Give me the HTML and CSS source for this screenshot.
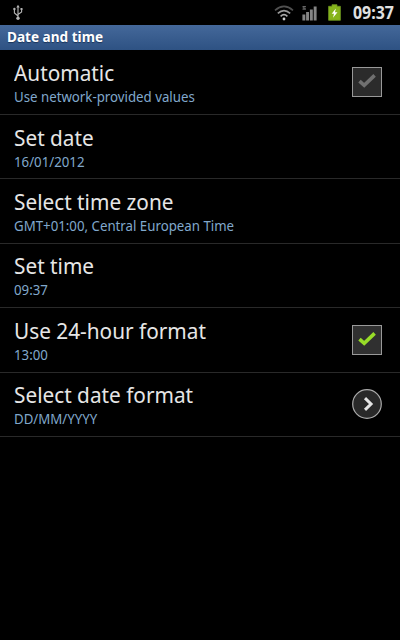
FILE: index.html
```html
<!DOCTYPE html>
<html lang="en">
<head>
<meta charset="utf-8">
<title>Date and time</title>
<link rel="stylesheet" href="styles.css">
</head>
<body>
<div class="status">
  <svg class="usb" width="12" height="17" viewBox="0 0 12 17" fill="none" stroke="#b4b4b4" stroke-width="1.1">
    <path d="M6 3v11M6 12L2.4 9V6M6 10.5L9.6 8V5"/>
    <path d="M6 .8L7.7 3.6H4.3zM1.2 5a1.2 1.2 0 1 0 2.4 0a1.2 1.2 0 1 0-2.4 0M8.5 4h2v2H8.5z" fill="#b4b4b4" stroke="none"/>
    <circle cx="6" cy="14.3" r="1.7" fill="#b4b4b4" stroke="none"/>
  </svg>
  <svg class="wifi" width="20" height="16" viewBox="0 0 20 16" fill="none" stroke-width="1.6">
    <path d="M1 5.3Q10-2.6 19 5.3" stroke="#505050"/>
    <path d="M3.8 8.4Q10 2.7 16.2 8.4" stroke="#999"/>
    <path d="M6.6 11.3Q10 8.1 13.4 11.3" stroke="#aaa"/>
    <circle cx="10" cy="14" r="1.4" fill="#ccc"/>
  </svg>
  <svg class="signal" width="15" height="16" viewBox="0 0 15 16" fill="#858585">
    <path d="M.4 9.5h2.9v6H.4zM4.1 7H7v8.5H4.1zM7.9 4.5h2.9v11H7.9zM11.7 1.6h2.9v13.9h-2.9z"/>
    <path d="M.5 1h3.4v1.3H2.4v1h1.5v1.4H.5V3.4h.9v-1H.5z" fill="#666"/>
  </svg>
  <svg class="battery" width="13" height="17" viewBox="0 0 13 17">
    <path d="M4 .7h5v1.6h3.4v14H.6v-14H4z" fill="#86b41c" stroke="#6b9420" stroke-width=".8"/>
    <path d="M7.8 4.4L3.7 9.8H6L5 13.8L9.5 8.2H7z" fill="#fff"/>
  </svg>
  <span class="clock">09:37</span>
</div>
<header class="titlebar"><span>Date and time</span></header>
<main class="list">
  <div class="row">
    <div class="text"><span class="title">Automatic</span><span class="sub">Use network-provided values</span></div>
    <svg class="control off" width="31" height="31" viewBox="0 0 31 31">
      <rect class="box" x=".5" y=".5" width="29" height="29"/><path class="tick" d="M7.5 14.2L12.2 18.4L22.6 8.4"/>
    </svg>
  </div>
  <div class="row">
    <div class="text"><span class="title">Set date</span><span class="sub">16/01/2012</span></div>
  </div>
  <div class="row">
    <div class="text"><span class="title">Select time zone</span><span class="sub">GMT+01:00, Central European Time</span></div>
  </div>
  <div class="row">
    <div class="text"><span class="title">Set time</span><span class="sub">09:37</span></div>
  </div>
  <div class="row">
    <div class="text"><span class="title">Use 24-hour format</span><span class="sub">13:00</span></div>
    <svg class="control on" width="31" height="31" viewBox="0 0 31 31">
      <rect class="box" x=".5" y=".5" width="29" height="29"/><path class="tick" d="M7.5 14.2L12.2 18.4L22.6 8.4"/>
    </svg>
  </div>
  <div class="row">
    <div class="text"><span class="title">Select date format</span><span class="sub">DD/MM/YYYY</span></div>
    <svg class="control" width="31" height="31" viewBox="0 0 31 31">
      <circle class="disc" cx="15" cy="15" r="14.3"/><path class="arrow" d="M13 9.2L19 15L13 20.8"/>
    </svg>
  </div>
</main>
</body>
</html>
```
FILE: styles.css
```css
* { box-sizing: border-box; }
body {
  margin: 0;
  height: 640px;
  overflow: hidden;
  background: #000;
  color: #e6e6e6;
  font-family: "Noto Sans", "Open Sans", sans-serif;
}
.status {
  display: flex;
  align-items: center;
  height: 25px;
  padding: 0 6px 0 12px;
}
.usb { margin-right: auto; }
.signal { margin-left: 8px; }
.battery { margin-left: 11px; }
.clock {
  width: 41px;
  margin-left: 12px;
  font-size: 17px;
  font-weight: 700;
  line-height: 25px;
  white-space: nowrap;
  color: #e0e0e0;
  transform: scaleX(.935);
  transform-origin: 0 0;
}
.titlebar {
  height: 25px;
  padding-left: 7px;
  background: linear-gradient(#44689a, #2e5283);
  font-size: 14px;
  font-weight: 700;
  line-height: 24px;
  color: #fff;
  text-shadow: 0 1px 1px #1b355a;
}
.titlebar span {
  display: inline-block;
  transform: scaleX(.97);
  transform-origin: 0 0;
}
.list { padding-top: .6px; }
.row {
  display: flex;
  align-items: center;
  justify-content: space-between;
  height: 64.4px;
  padding: 0 17px 0 14px;
  border-bottom: 1px solid #292929;
}
.text {
  display: flex;
  flex-direction: column;
  align-items: flex-start;
  padding-top: 3px;
  white-space: nowrap;
}
.title {
  font-size: 22.5px;
  line-height: 26px;
  transform: scaleX(.924);
  transform-origin: 0 0;
}
.sub {
  font-size: 14px;
  line-height: 21px;
  color: #80a8cc;
  transform: scaleX(.947);
  transform-origin: 0 0;
}
.control { flex: none; fill: none; margin-top: 1px; }
.box { fill: #303030; stroke: #999; }
.off .box { fill: #2b2b2b; }
.tick { stroke-width: 3.6; }
.off .tick { stroke: #707070; }
.on .tick { stroke: #98dc28; }
.disc { fill: #292929; stroke: #aaa; stroke-width: 1.2; }
.arrow { stroke: #e4e4e4; stroke-width: 3; }
```
